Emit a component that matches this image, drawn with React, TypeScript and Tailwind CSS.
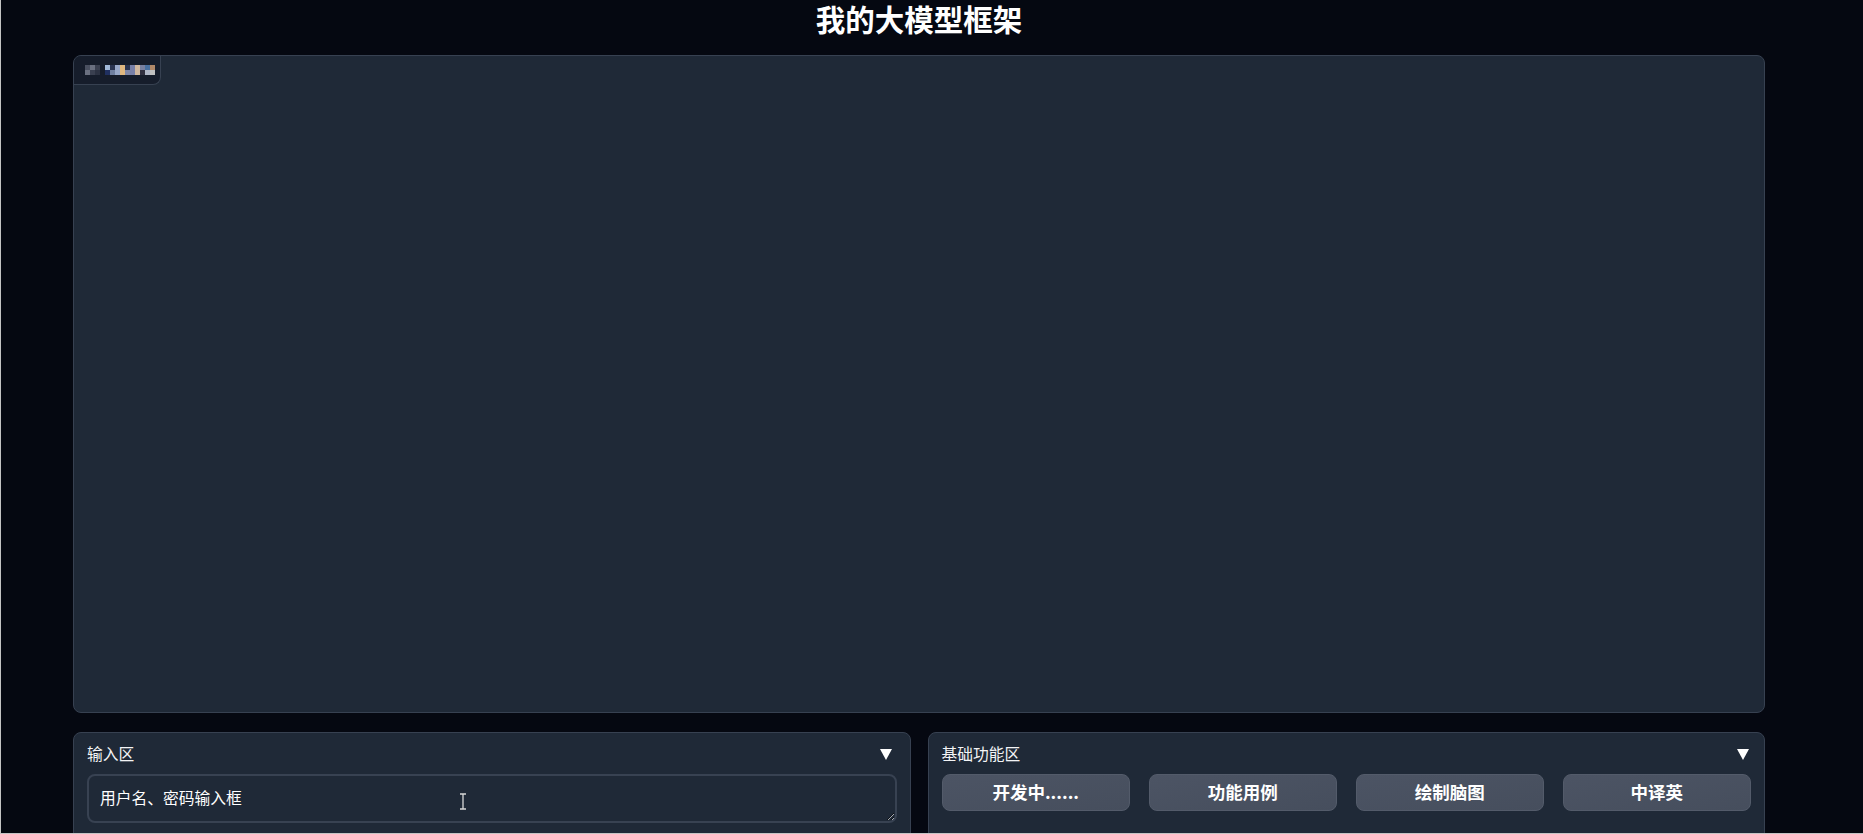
import React from "react";

const font = { fontFamily: '"Noto Sans CJK SC", "Noto Sans", "Liberation Sans", sans-serif' };

const mosaicTop = ["#4a5060", "#6a7080", "#3a4050", "", "#a0b8d8", "#2a3450", "#98a8c8", "#e0b880", "#2a3450", "#7880a8", "#d0b8a0", "#7880a0", "#4870a0", "#b08868"];
const mosaicBot = ["#6a7080", "#3a4050", "#2c3242", "", "#203060", "#7080a0", "#98a8c8", "#e0b880", "#8088a8", "#7880a8", "#d0b8a0", "#303040", "#b0b8c8", "#c0c0c0"];

function Arrow() {
  return (
    <svg width="12" height="11" viewBox="0 0 12 11" className="shrink-0">
      <polygon points="0,0 12,0 6,11" fill="#ffffff" />
    </svg>
  );
}

function Badge() {
  return (
    <div className="flex h-[29px] w-[87px] items-center rounded-br-lg border-b border-r border-[#374151] bg-[#161d2b] pl-[11px]">
      <div className="flex flex-col">
        <div className="flex">
          {mosaicTop.map((c, i) => (
            <div key={i} className="h-[5px] w-[5px]" style={{ backgroundColor: c || "transparent" }} />
          ))}
        </div>
        <div className="flex">
          {mosaicBot.map((c, i) => (
            <div key={i} className="h-[5px] w-[5px]" style={{ backgroundColor: c || "transparent" }} />
          ))}
        </div>
      </div>
    </div>
  );
}

function Btn({ label }: { label: string }) {
  return (
    <button className="flex h-[37px] items-center justify-center rounded-lg border border-[#535b6a] bg-gradient-to-br from-[#4c5464] to-[#464e5d] text-[17.5px] font-bold text-white">
      {label}
    </button>
  );
}

export default function App() {
  return (
    <div
      className="relative h-[834px] w-full overflow-hidden border-b border-l border-[#c4c4c4] bg-[#050811] text-white"
      style={font}
    >
      <div className="ml-[72px] w-[1692px]">
        <h1 className="h-[36px] text-center text-[29.5px] font-bold leading-[36px] text-white">我的大模型框架</h1>
        <div className="mt-[19px] h-[658px] overflow-hidden rounded-lg border border-[#374151] bg-[#1f2937]">
          <Badge />
        </div>
        <div className="mt-[19px] grid grid-cols-2 gap-[17px]">
          <div className="h-[200px] rounded-lg border border-[#374151] bg-[#1f2937] px-[13px] pt-[11px]">
            <div className="flex h-[20px] items-center justify-between">
              <span className="text-[15.75px] leading-[20px] text-[#f3f4f6]">输入区</span>
              <div className="mr-[5px]"><Arrow /></div>
            </div>
            <textarea
              readOnly
              defaultValue="用户名、密码输入框"
              className="mt-[10px] block h-[49px] w-full resize-y rounded-lg border-2 border-[#384252] bg-[#1f2937] px-[11px] py-[11px] text-[15.75px] leading-[22px] text-white outline-none [color-scheme:dark]"
              style={font}
            />
          </div>
          <div className="h-[200px] rounded-lg border border-[#374151] bg-[#1f2937] px-[13px] pt-[11px]">
            <div className="flex h-[20px] items-center justify-between">
              <span className="text-[15.75px] leading-[20px] text-[#f3f4f6]">基础功能区</span>
              <div className="mr-[2px]"><Arrow /></div>
            </div>
            <div className="mt-[10px] grid grid-cols-4 gap-[18.5px]">
              <Btn label="开发中......" />
              <Btn label="功能用例" />
              <Btn label="绘制脑图" />
              <Btn label="中译英" />
            </div>
          </div>
        </div>
      </div>
      <svg className="absolute left-[458px] top-[793px]" width="8" height="17" viewBox="0 0 8 17">
        <path d="M1 1h6M4 1v15M1 16h6" stroke="#d8d8d8" strokeWidth="1.3" fill="none" />
      </svg>
    </div>
  );
}
